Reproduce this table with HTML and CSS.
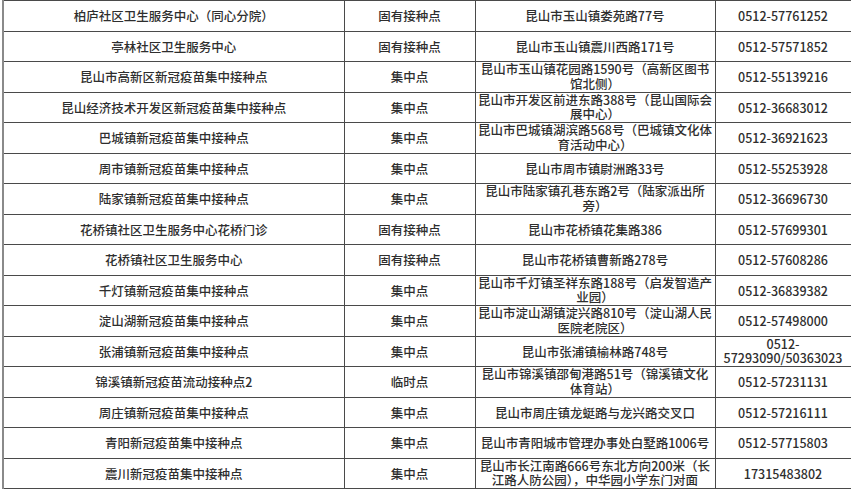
FILE: index.html
```html
<!DOCTYPE html>
<html lang="zh-CN">
<head>
<meta charset="utf-8">
<title>昆山市新冠疫苗接种点</title>
<link rel="stylesheet" href="styles.css">
</head>
<body>
<table class="sites">
<colgroup>
<col class="c-name"><col class="c-type"><col class="c-addr"><col class="c-tel">
</colgroup>
<tbody>
<tr><td>柏庐社区卫生服务中心（同心分院）</td><td>固有接种点</td><td>昆山市玉山镇娄苑路77号</td><td>0512-57761252</td></tr>
<tr><td>亭林社区卫生服务中心</td><td>固有接种点</td><td>昆山市玉山镇震川西路171号</td><td>0512-57571852</td></tr>
<tr><td>昆山市高新区新冠疫苗集中接种点</td><td>集中点</td><td class="two">昆山市玉山镇花园路1590号（高新区图书<br>馆北侧）</td><td>0512-55139216</td></tr>
<tr><td>昆山经济技术开发区新冠疫苗集中接种点</td><td>集中点</td><td class="two">昆山市开发区前进东路388号（昆山国际会<br>展中心）</td><td>0512-36683012</td></tr>
<tr><td>巴城镇新冠疫苗集中接种点</td><td>集中点</td><td class="two">昆山市巴城镇湖滨路568号（巴城镇文化体<br>育活动中心）</td><td>0512-36921623</td></tr>
<tr><td>周市镇新冠疫苗集中接种点</td><td>集中点</td><td>昆山市周市镇尉洲路33号</td><td>0512-55253928</td></tr>
<tr><td>陆家镇新冠疫苗集中接种点</td><td>集中点</td><td class="two">昆山市陆家镇孔巷东路2号（陆家派出所<br>旁）</td><td>0512-36696730</td></tr>
<tr><td>花桥镇社区卫生服务中心花桥门诊</td><td>固有接种点</td><td>昆山市花桥镇花集路386</td><td>0512-57699301</td></tr>
<tr><td>花桥镇社区卫生服务中心</td><td>固有接种点</td><td>昆山市花桥镇曹新路278号</td><td>0512-57608286</td></tr>
<tr><td>千灯镇新冠疫苗集中接种点</td><td>集中点</td><td class="two">昆山市千灯镇圣祥东路188号（启发智造产<br>业园）</td><td>0512-36839382</td></tr>
<tr><td>淀山湖新冠疫苗集中接种点</td><td>集中点</td><td class="two">昆山市淀山湖镇淀兴路810号（淀山湖人民<br>医院老院区）</td><td>0512-57498000</td></tr>
<tr><td>张浦镇新冠疫苗集中接种点</td><td>集中点</td><td>昆山市张浦镇榆林路748号</td><td class="two">0512-<br>57293090/50363023</td></tr>
<tr><td>锦溪镇新冠疫苗流动接种点2</td><td>临时点</td><td class="two">昆山市锦溪镇邵甸港路51号（锦溪镇文化<br>体育站）</td><td>0512-57231131</td></tr>
<tr><td>周庄镇新冠疫苗集中接种点</td><td>集中点</td><td>昆山市周庄镇龙蜓路与龙兴路交叉口</td><td>0512-57216111</td></tr>
<tr><td>青阳新冠疫苗集中接种点</td><td>集中点</td><td>昆山市青阳城市管理办事处白墅路1006号</td><td>0512-57715803</td></tr>
<tr><td>震川新冠疫苗集中接种点</td><td>集中点</td><td class="two">昆山市长江南路666号东北方向200米（长<br>江路人防公园），中华园小学东门对面</td><td>17315483802</td></tr>
</tbody>
</table>
</body>
</html>
```
FILE: styles.css
```css
html, body {
  margin: 0;
  padding: 0;
  background: #ffffff;
}

body {
  font-family: "Noto Sans CJK SC", "Noto Sans", sans-serif;
  font-size: 12.5px;
  color: #2e2e2e;
  overflow: hidden;
}

.sites {
  border-collapse: collapse;
  table-layout: fixed;
  width: 848px;
  margin: 0 0 0 2px;
}

.c-name { width: 341px; }
.c-type { width: 131px; }
.c-addr { width: 240px; }
.c-tel  { width: 136px; }

.sites td {
  border: 1px solid #4a4a4a;
  height: 29.5px;
  padding: 0 2px;
  text-align: center;
  vertical-align: middle;
  white-space: nowrap;
  line-height: 15px;
  font-weight: 500;
}

.sites td:first-child {
  border-left: 2px solid #8a8a8a;
}

.sites td.two {
  line-height: 14.5px;
}
```
